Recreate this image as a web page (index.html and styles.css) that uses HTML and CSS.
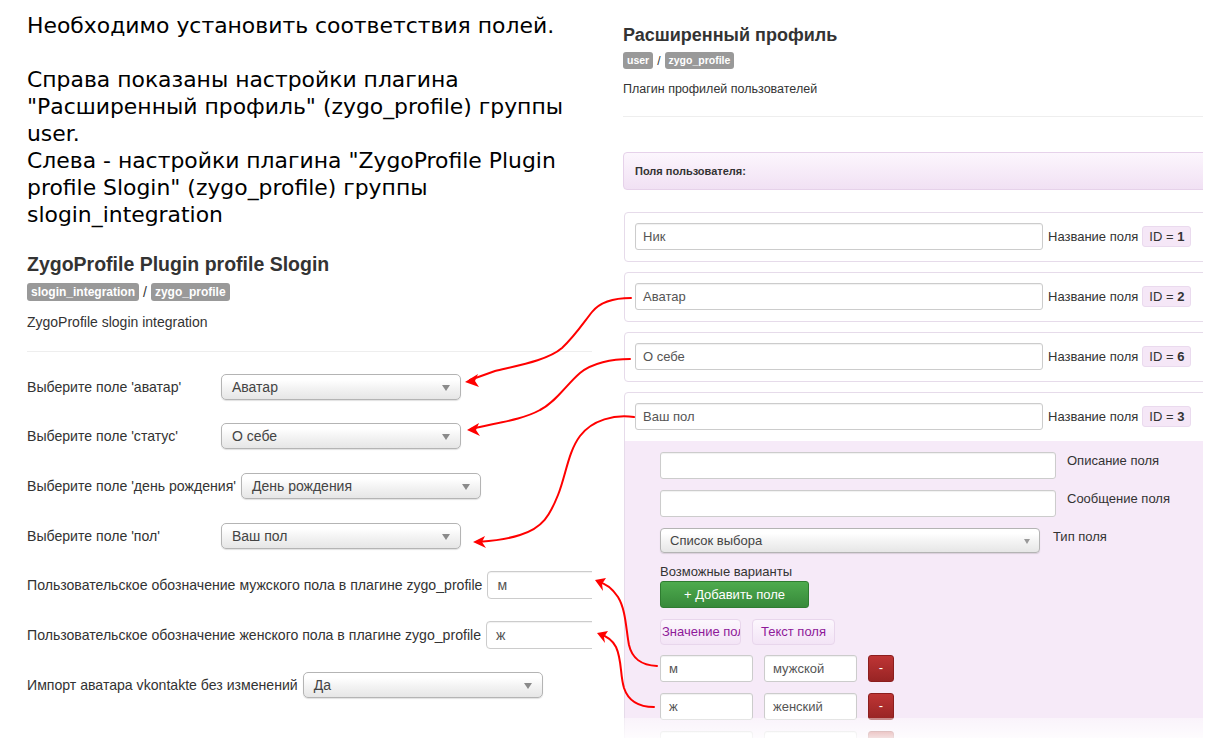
FILE: index.html
```html
<!DOCTYPE html>
<html lang="ru">
<head>
<meta charset="utf-8">
<title>Соответствия полей</title>
<link rel="stylesheet" href="styles.css">
</head>
<body>
<div class="page">
  <div class="left">
    <div class="note">
      <p>Необходимо установить соответствия полей.</p>
      <p class="gap">Справа показаны настройки плагина<br>"Расширенный профиль" (zygo_profile) группы<br>user.<br>Слева - настройки плагина "ZygoProfile Plugin<br>profile Slogin" (zygo_profile) группы<br>slogin_integration</p>
    </div>
    <div class="plugin-left">
      <h2 class="title">ZygoProfile Plugin profile Slogin</h2>
      <div class="tags"><span class="badge">slogin_integration</span><span>/</span><span class="badge">zygo_profile</span></div>
      <p class="desc">ZygoProfile slogin integration</p>
      <hr class="rule">
      <div class="form">
        <div class="row"><label>Выберите поле 'аватар'</label><div class="select">Аватар</div></div>
        <div class="row"><label>Выберите поле 'статус'</label><div class="select">О себе</div></div>
        <div class="row"><label>Выберите поле 'день рождения'</label><div class="select">День рождения</div></div>
        <div class="row"><label>Выберите поле 'пол'</label><div class="select">Ваш пол</div></div>
        <div class="row"><label>Пользовательское обозначение мужского пола в плагине zygo_profile</label><div class="text-in">м</div></div>
        <div class="row"><label>Пользовательское обозначение женского пола в плагине zygo_profile</label><div class="text-in">ж</div></div>
        <div class="row"><label>Импорт аватара vkontakte без изменений</label><div class="select">Да</div></div>
      </div>
    </div>
  </div>

  <div class="right">
    <h2 class="title">Расширенный профиль</h2>
    <div class="tags"><span class="badge">user</span><span>/</span><span class="badge">zygo_profile</span></div>
    <p class="desc">Плагин профилей пользователей</p>
    <hr class="rule">
    <div class="section-head">Поля пользователя:</div>

    <div class="card">
      <div class="card-row"><div class="field">Ник</div><span class="lbl">Название поля</span><span class="id">ID = <b>1</b></span></div>
    </div>
    <div class="card">
      <div class="card-row"><div class="field">Аватар</div><span class="lbl">Название поля</span><span class="id">ID = <b>2</b></span></div>
    </div>
    <div class="card">
      <div class="card-row"><div class="field">О себе</div><span class="lbl">Название поля</span><span class="id">ID = <b>6</b></span></div>
    </div>
    <div class="card open">
      <div class="card-row"><div class="field">Ваш пол</div><span class="lbl">Название поля</span><span class="id">ID = <b>3</b></span></div>
      <div class="details">
        <div class="drow"><div class="field mid"></div><span class="dlbl">Описание поля</span></div>
        <div class="drow"><div class="field mid"></div><span class="dlbl">Сообщение поля</span></div>
        <div class="drow"><div class="select small">Список выбора</div><span class="dlbl tl">Тип поля</span></div>
        <div class="variants">Возможные варианты</div>
        <div class="btn-add">+ Добавить поле</div>
        <div class="tabs"><span class="tab first">Значение поля</span><span class="tab">Текст поля</span></div>
        <div class="opt"><div class="field short">м</div><div class="field short">мужской</div><div class="btn-del">-</div></div>
        <div class="opt"><div class="field short">ж</div><div class="field short">женский</div><div class="btn-del">-</div></div>
        <div class="opt"><div class="field short"></div><div class="field short"></div><div class="btn-del"></div></div>
      </div>
    </div>
    <div class="fade"></div>
  </div>
</div>

<svg class="arrows" width="1217" height="738" viewBox="0 0 1217 738" xmlns="http://www.w3.org/2000/svg">
  <g fill="none" stroke="#f00" stroke-width="2" stroke-linecap="round">
    <path d="M631,298 C612,298 600,302 592,312 C584,322 575,336 562,348 C548,360 520,365 495,371 L470,380"/>
    <path d="M630,359 C612,359 592,363 580,373 C566,385 556,402 540,410 C522,420 495,423 471,429"/>
    <path d="M634,417 C615,414 592,420 580,436 C568,452 566,475 558,495 C550,515 543,528 520,535 C505,540 490,541 478,542"/>
    <path d="M657,666 C640,665 632,658 629,645 C626,630 626,610 618,597 C612,588 604,583 598,582"/>
    <path d="M654,707 C638,707 628,700 624,688 C620,675 622,660 616,647 C612,639 606,636 600,634"/>
  </g>
  <g fill="#f00">
    <polygon points="465,382 478,374 475,381 479,387"/>
    <polygon points="467,430 479,423 476,430 480,436"/>
    <polygon points="473,542 485,536 482,542 486,548"/>
    <polygon points="595,580 606,578 602,584 603,591"/>
    <polygon points="597,633 608,631 604,637 605,643"/>
  </g>
</svg>
</body>
</html>
```

FILE: styles.css
```css
* { box-sizing: border-box; }
html, body { margin: 0; padding: 0; background: #fff; }
body {
  width: 1217px;
  height: 738px;
  overflow: hidden;
  position: relative;
  font-family: "Liberation Sans", Arial, sans-serif;
  color: #333;
}
.page { display: flex; height: 738px; }

/* ---------- left column ---------- */
.left {
  width: 592px;
  flex: none;
  overflow: hidden;
  padding-left: 27px;
}
.note {
  font-family: "DejaVu Sans", sans-serif;
  font-size: 21.9px;
  line-height: 27px;
  color: #000;
  padding-top: 12px;
  white-space: nowrap;
}
.note p { margin: 0; }
.note .gap { margin-top: 27px; }

.title { margin: 0; font-weight: bold; color: #333; }
.tags { display: flex; align-items: center; gap: 5px; color: #333; }
.badge { background: #999; color: #fff; font-weight: bold; border-radius: 3px; }
.desc { margin: 0; }
.rule { border: 0; border-top: 1px solid #eee; margin: 0; }

.plugin-left .title { font-size: 19.5px; line-height: 24px; margin-top: 24px; }
.plugin-left .tags { margin-top: 7px; font-size: 14px; height: 18px; gap: 4px; }
.plugin-left .badge { font-size: 12px; line-height: 14px; padding: 2px 4px; }
.plugin-left .desc { font-size: 14px; line-height: 20px; margin-top: 11px; }
.plugin-left .rule { margin-top: 19px; width: 600px; }

.form { margin-top: 10px; }
.row {
  display: flex;
  align-items: center;
  height: 49.67px;
  font-size: 14.1px;
  white-space: nowrap;
}
.row label { flex: none; min-width: 189px; margin-right: 5px; color: #333; }
.select {
  position: relative;
  flex: none;
  width: 240px;
  height: 26px;
  border: 1px solid #b4b4b4;
  border-radius: 5px;
  background: linear-gradient(#ffffff 20%, #f3f3f3 55%, #e6e6e6);
  box-shadow: 0 1px 1px rgba(0,0,0,.12);
  padding-left: 10px;
  font-size: 14px;
  line-height: 24px;
  color: #444;
}
.select::after {
  content: "";
  position: absolute;
  right: 10px;
  top: 10px;
  border-left: 4px solid transparent;
  border-right: 4px solid transparent;
  border-top: 6px solid #8a8a8a;
}
.text-in {
  flex: none;
  width: 210px;
  height: 28px;
  border: 1px solid #ccc;
  border-radius: 4px;
  background: #fff;
  box-shadow: inset 0 1px 1px rgba(0,0,0,.06);
  padding-left: 9px;
  line-height: 26px;
  color: #555;
}

/* ---------- right column ---------- */
.right {
  position: relative;
  width: 611px;
  flex: none;
  overflow: hidden;
  padding-left: 31px;
  font-size: 13px;
}
.right .title { font-size: 18px; line-height: 22px; margin-top: 24px; }
.right .tags { margin-top: 6px; height: 17px; font-size: 12px; gap: 4px; }
.right .badge { font-size: 10.5px; line-height: 13px; padding: 2px 4px; }
.right .desc { font-size: 12.5px; line-height: 18px; margin-top: 11px; }
.right .rule { margin-top: 18px; }

.section-head {
  margin-top: 35px;
  margin-right: -20px;
  height: 38px;
  border: 1px solid #e6d2ea;
  border-radius: 4px;
  background: linear-gradient(#fcf6fd, #f1e1f4);
  padding-left: 11px;
  font-size: 11px;
  font-weight: bold;
  line-height: 36px;
  color: #333;
}

.card {
  margin-top: 10px;
  margin-right: -20px;
  margin-left: 1px;
  border: 1px solid #e6dbea;
  border-radius: 4px;
  background: #fff;
}
.section-head + .card { margin-top: 22px; }
.card-row {
  display: flex;
  align-items: center;
  padding: 10px 10px 11px;
  white-space: nowrap;
}
.field {
  flex: none;
  height: 27px;
  border: 1px solid #ccc;
  border-radius: 3px;
  background: #fff;
  box-shadow: inset 0 1px 1px rgba(0,0,0,.06);
  padding-left: 7px;
  line-height: 25px;
  font-size: 13px;
  color: #555;
}
.card-row .field { width: 408px; }
.lbl { margin-left: 5px; color: #333; }
.id {
  margin-left: 4px;
  height: 21px;
  padding: 0 6px;
  border: 1px solid #eadaee;
  border-radius: 3px;
  background: #f5e7f7;
  line-height: 19px;
  color: #333;
}
.id b { font-weight: bold; }

.details {
  background: #f6eaf8;
  padding: 11px 0 20px 35px;
  white-space: nowrap;
}
.drow {
  display: flex;
  align-items: flex-start;
  margin-bottom: 11px;
}
.field.mid { width: 396px; }
.dlbl { margin-left: 11px; line-height: 18px; color: #333; }
.dlbl.tl { margin-left: 13px; }
.select.small {
  width: 380px;
  height: 25px;
  line-height: 23px;
  font-size: 13px;
  padding-left: 9px;
  border-radius: 4px;
}
.select.small::after { top: 10px; right: 9px; border-top-width: 5px; border-left-width: 3.5px; border-right-width: 3.5px; border-top-color: #999; }
.variants { margin-top: -1px; line-height: 18px; color: #333; }
.btn-add {
  margin-top: 0;
  width: 149px;
  height: 27px;
  border: 1px solid #2f7c31;
  border-radius: 3px;
  background: linear-gradient(#4eab4e, #37893a);
  color: #fff;
  text-align: center;
  line-height: 25px;
  font-size: 13px;
}
.tabs { display: flex; gap: 11px; margin-top: 11px; }
.tab {
  height: 26px;
  border: 1px solid #e8d6ec;
  border-radius: 4px;
  background: linear-gradient(#fcf7fd, #f3e4f6);
  color: #8e1a99;
  line-height: 24px;
  padding: 0 8px;
  font-size: 13px;
}
.tab.first { width: 81px; overflow: hidden; padding: 0 0 0 1px; }
.opt { display: flex; gap: 11px; margin-top: 11px; }
.tabs + .opt { margin-top: 10px; }
.field.short { width: 93px; padding-left: 8px; }
.btn-del {
  width: 26px;
  height: 27px;
  border: 1px solid #8c1e1e;
  border-radius: 3px;
  background: linear-gradient(#be3535, #982424);
  color: #fff;
  text-align: center;
  line-height: 24px;
  font-size: 13px;
}
.fade {
  position: absolute;
  left: 0;
  right: 0;
  bottom: 0;
  height: 20px;
  background: linear-gradient(rgba(255,255,255,0.45), rgba(255,255,255,0.85));
}

.arrows {
  position: absolute;
  top: 0;
  left: 0;
  pointer-events: none;
}
```
